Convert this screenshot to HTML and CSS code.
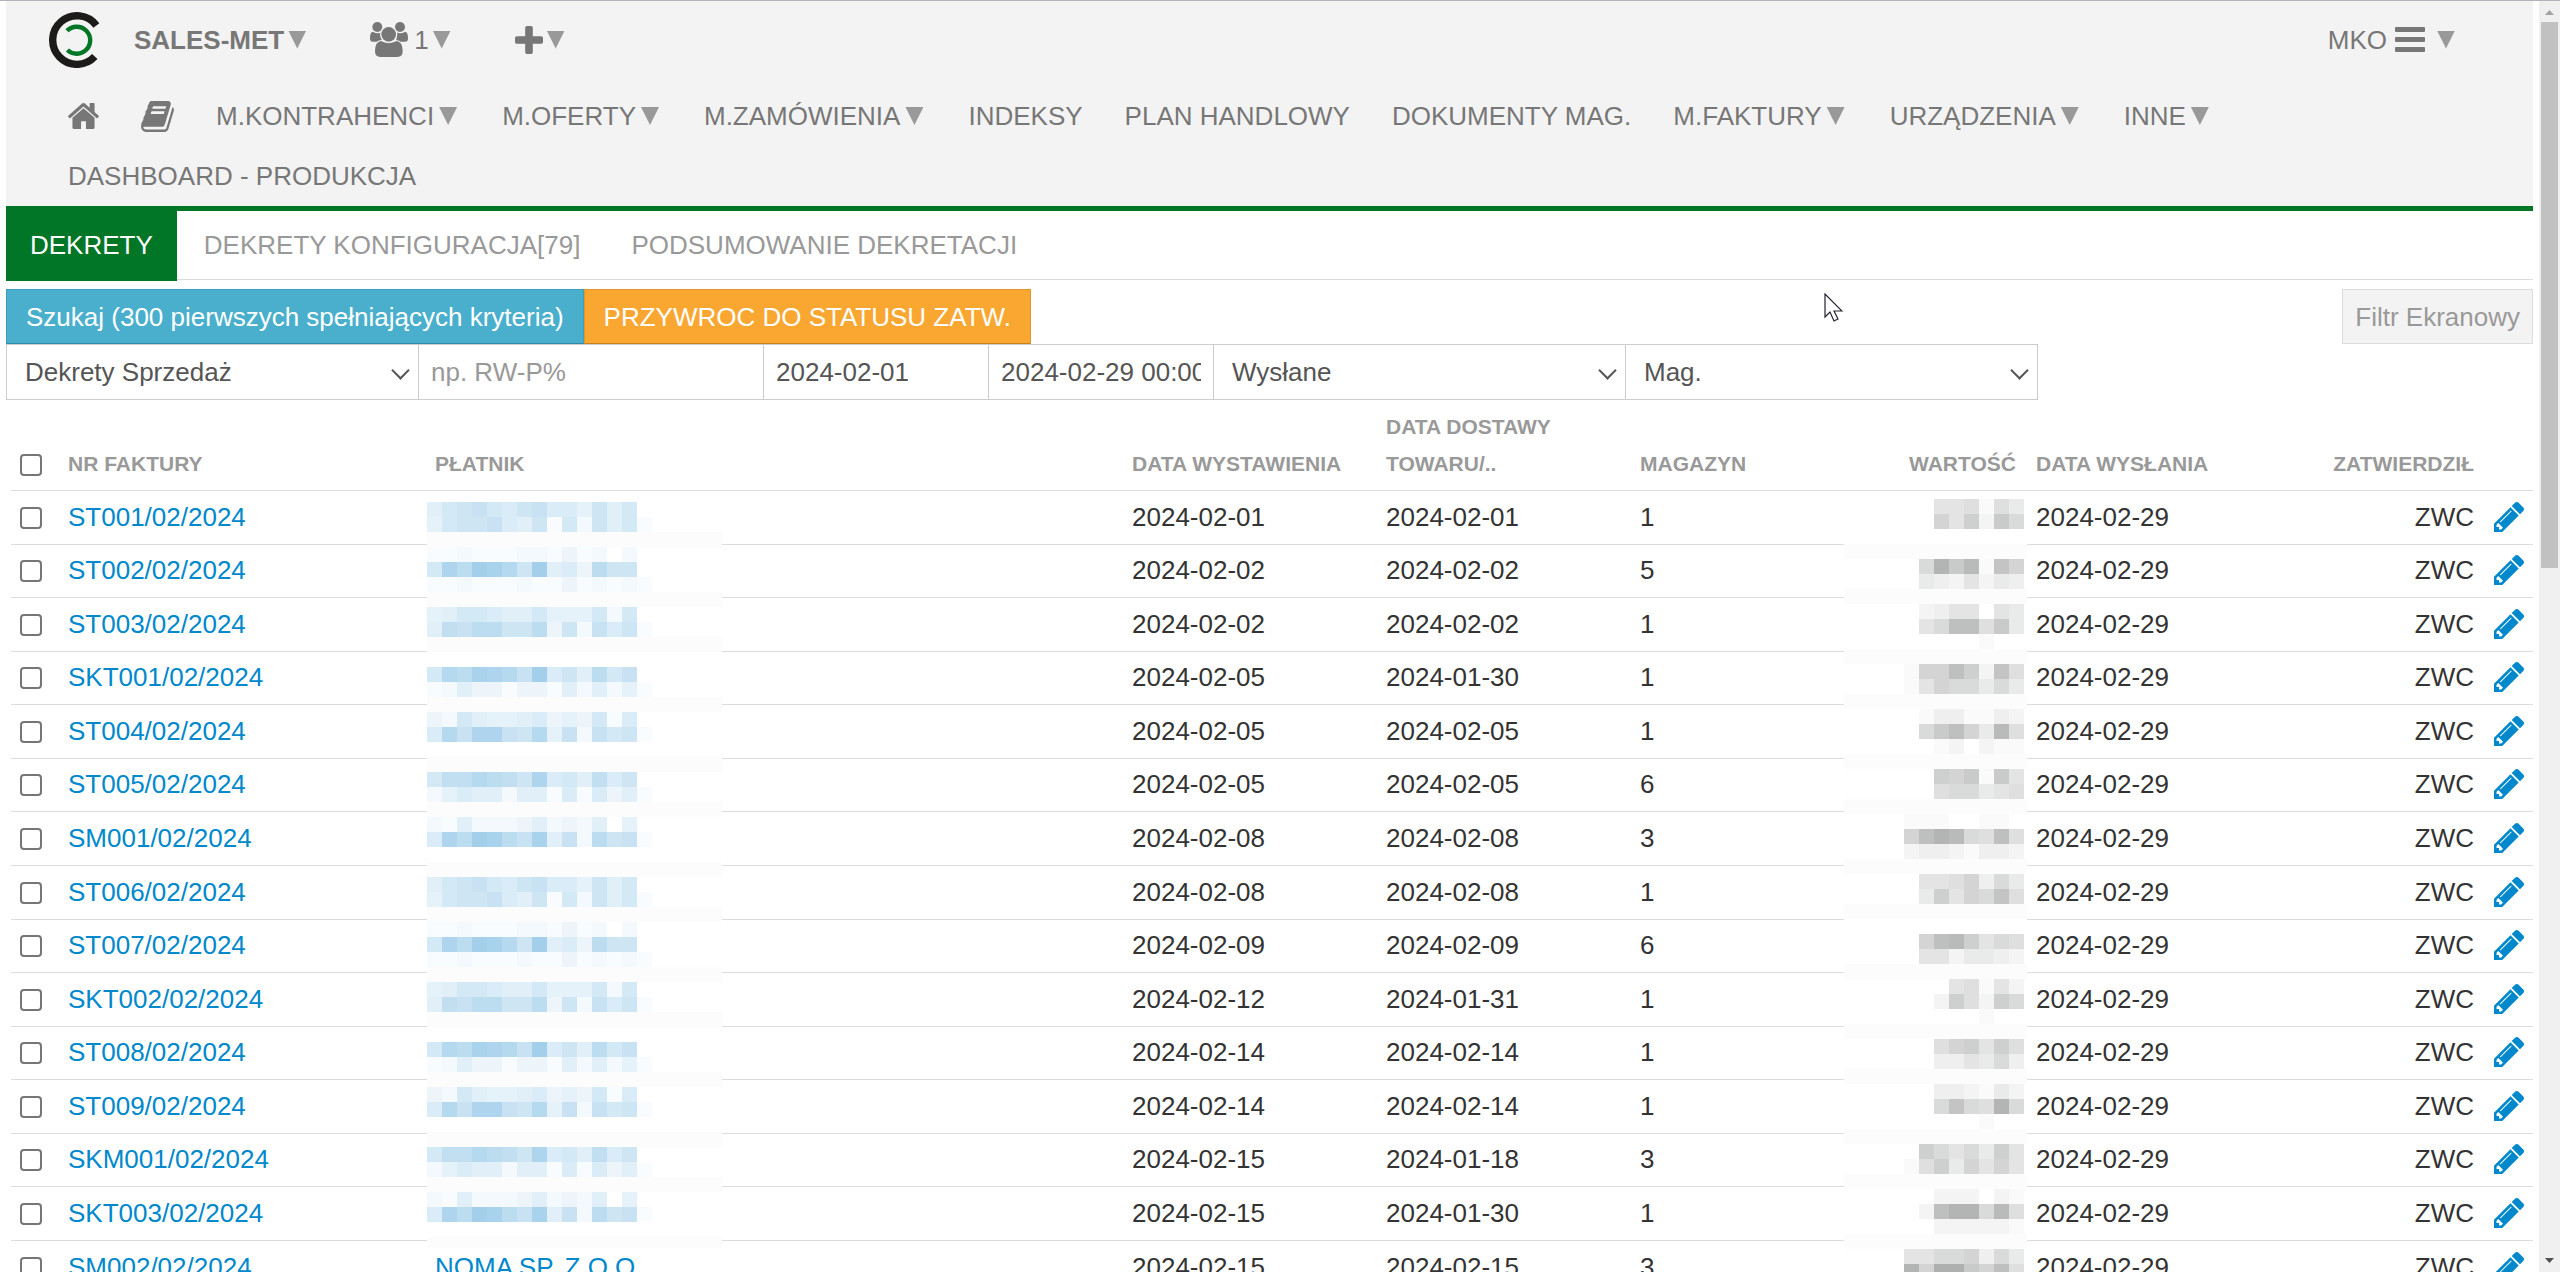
FILE: index.html
```html
<!DOCTYPE html>
<html lang="pl">

	<head>
		<meta charset="utf-8">
		<meta name="viewport" content="width=device-width,initial-scale=1" />
		<title>Dekrety</title>
		<link rel="stylesheet" href="styles.css">
	</head>

	<body>
		<div class="page">
			<header class="header">
				<div class="topbar">
					<a class="logo" href="#" aria-label="Start">
						<svg width="52" height="56" viewBox="0 0 52 56">
							<path d="M47.4 13.4A24.3 24.3 0 1 0 45.8 44.6" fill="none" stroke="#1c1b19" stroke-width="7.4" />
							<path d="M18 18.8A13.5 13.5 0 1 1 18.4 38" fill="none" stroke="#007626" stroke-width="4.4" />
						</svg>
					</a>
					<a class="top-link brand" href="#">SALES-MET<span class="caret"></span></a>
					<a class="top-link users" href="#">
						<svg width="38" height="35" viewBox="0 0 114 105">
							<path d="M0 50q0-21 9-21q12 8 26 2v28H9q-9 0-9-9zM114 50q0-21-9-21q-12 8-26 2v28h26q9 0 9-9z" />
							<circle cx="22" cy="15" r="15" />
							<circle cx="90" cy="15" r="15" />
							<circle class="gap" cx="56" cy="37" r="26" />
							<path class="gap" d="M12 88q0-33 22-34h44q22 1 22 34z" />
							<circle cx="56" cy="37" r="22" />
							<path d="M15 88q0-29 18-31q23 13 47 0q18 2 18 31q0 17-16 17H31q-16 0-16-17z" />
						</svg>
						<span>1</span><span class="caret"></span>
					</a>
					<a class="top-link add" href="#" aria-label="Dodaj">
						<svg width="28" height="28" viewBox="192 128 1408 1408"><path d="M1600 736v192q0 40-28 68t-68 28h-416v416q0 40-28 68t-68 28h-192q-40 0-68-28t-28-68v-416h-416q-40 0-68-28t-28-68v-192q0-40 28-68t68-28h416v-416q0-40 28-68t68-28h192q40 0 68 28t28 68v416h416q40 0 68 28t28 68z" /></svg>
						<span class="caret"></span>
					</a>
					<a class="top-link user" href="#">MKO
						<span class="bars"><i></i><i></i><i></i></span>
						<span class="caret"></span>
					</a>
				</div>
				<nav class="nav">
					<a href="#" aria-label="Strona główna">
						<svg width="31" height="26" viewBox="89 253 1614 1283" preserveAspectRatio="none"><path d="M1472 992v480q0 26-19 45t-45 19h-384v-384h-256v384h-384q-26 0-45-19t-19-45v-480q0-1 .5-3t.5-3l575-474 575 474q1 2 1 6zm223-69l-62 74q-8 9-21 11h-3q-13 0-21-7l-692-577-692 577q-12 8-24 7-13-2-21-11l-62-74q-8-10-7-23.500t11-21.500l719-599q32-26 76-26t76 26l244 204v-195q0-14 9-23t23-9h192q14 0 23 9t9 23v408l219 182q10 8 11 21.500t-7 23.500z" /></svg>
					</a>
					<a href="#" aria-label="Książka">
						<svg width="33" height="31" viewBox="62 128 1668 1536" preserveAspectRatio="none"><path d="M1703 478q40 57 18 129l-275 906q-19 64-76.500 107.500t-122.500 43.500h-923q-77 0-148.500-53.500t-99.500-131.500q-24-67-2-127 0-4 3-27t4-37q1-8-3-21.500t-3-19.500q2-11 8-21t16.500-23.500 16.500-23.500q23-38 45-91.500t30-91.500q3-10 .5-30t-.5-28q3-11 17-28t17-23q21-36 42-92t25-90q1-9-2.500-32t.5-28q4-13 22-30.500t22-22.500q19-26 42.500-84.500t27.500-96.500q1-8-3-25.500t-2-26.500q2-8 9-18t18-23 17-21q8-12 16.500-30.500t15-35 16-36 19.500-32 26.500-23.500 36-11.500 47.500 5.500l-1 3q38-9 51-9h761q74 0 114 56t18 130l-274 906q-36 119-71.500 153.500t-128.500 34.500h-869q-27 0-38 15-11 16-1 43 24 70 144 70h923q29 0 56-15.500t35-41.500l300-987q7-22 5-57 38 15 59 43zm-1064 2q-4 13 2 22.500t20 9.500h608q13 0 25.500-9.500t16.500-22.500l21-64q4-13-2-22.500t-20-9.500h-608q-13 0-25.500 9.500t-16.500 22.500zm-83 256q-4 13 2 22.500t20 9.500h608q13 0 25.500-9.500t16.500-22.500l21-64q4-13-2-22.500t-20-9.500h-608q-13 0-25.500 9.500t-16.500 22.500z" /></svg>
					</a>
					<a href="#">M.KONTRAHENCI<span class="caret"></span></a>
					<a href="#">M.OFERTY<span class="caret"></span></a>
					<a href="#">M.ZAMÓWIENIA<span class="caret"></span></a>
					<a href="#">INDEKSY</a>
					<a href="#">PLAN HANDLOWY</a>
					<a href="#">DOKUMENTY MAG.</a>
					<a href="#">M.FAKTURY<span class="caret"></span></a>
					<a href="#">URZĄDZENIA<span class="caret"></span></a>
					<a href="#">INNE<span class="caret"></span></a>
					<a href="#">DASHBOARD - PRODUKCJA</a>
				</nav>
			</header>

			<div class="tabs">
				<a class="active" href="#">DEKRETY</a>
				<a href="#">DEKRETY KONFIGURACJA[79]</a>
				<a href="#">PODSUMOWANIE DEKRETACJI</a>
			</div>

			<form class="search">
				<div class="actions">
					<button type="button" class="btn btn-info">Szukaj (300 pierwszych spełniających kryteria)</button>
					<button type="button" class="btn btn-warning">PRZYWROC DO STATUSU ZATW.</button>
					<button type="button" class="btn btn-filter">Filtr Ekranowy</button>
				</div>
				<div class="filters">
					<div class="select">
						<select aria-label="Rodzaj"><option>Dekrety Sprzedaż</option></select>
					</div>
					<input class="number" type="text" placeholder="np. RW-P%" aria-label="Numer" />
					<input class="date" type="text" value="2024-02-01" aria-label="Data od" />
					<input class="date" type="text" value="2024-02-29 00:00:00" aria-label="Data do" />
					<div class="select">
						<select aria-label="Status"><option>Wysłane</option></select>
					</div>
					<div class="select">
						<select aria-label="Magazyn"><option>Mag.</option></select>
					</div>
				</div>
			</form>

			<table class="list">
				<colgroup>
					<col class="c-check" />
					<col class="c-nr" />
					<col />
					<col class="c-date" />
					<col class="c-date" />
					<col class="c-mag" />
					<col class="c-value" />
					<col class="c-sent" />
					<col class="c-who" />
					<col class="c-edit" />
				</colgroup>
				<thead>
					<tr>
						<th class="check"><input type="checkbox" aria-label="Zaznacz wszystkie" /></th>
						<th>NR FAKTURY</th>
						<th>PŁATNIK</th>
						<th>DATA WYSTAWIENIA</th>
						<th>DATA DOSTAWY TOWARU/..</th>
						<th>MAGAZYN</th>
						<th class="right">WARTOŚĆ</th>
						<th>DATA WYSŁANIA</th>
						<th class="right">ZATWIERDZIŁ</th>
						<th></th>
					</tr>
				</thead>
				<tbody id="rows"></tbody>
			</table>
		</div>

		<div class="scrollbar">
			<span class="arrow-up"></span>
			<span class="thumb"></span>
			<span class="arrow-down"></span>
		</div>

		<svg class="cursor" width="19" height="29" viewBox="0 0 19 29">
			<path d="M1 1v23l5-5 4 9 4-2-4-8h8z" fill="#fff" stroke="#223" stroke-width="1.2" />
		</svg>

		<script src="app.js"></script>
	</body>

</html>
```
FILE: styles.css
```css
* {
	box-sizing: border-box;
}

html,
body {
	height: 100%;
}

body {
	margin: 0;
	display: flex;
	overflow: hidden;
	border-top: 1px solid #b3b0b8;
	background: #fff;
	color: #333;
	font: 26px/36px "Liberation Sans", Arial, sans-serif;
}

a {
	color: #08c;
	text-decoration: none;
}

.page {
	flex: 1;
	min-width: 0;
	padding: 0 6px;
}

/* header */
.header {
	background: #f3f3f3;
	border-bottom: 5px solid #007626;
}

.header a {
	display: flex;
	align-items: center;
	color: #777;
}

.header svg {
	fill: currentColor;
}

.header .gap {
	fill: #f3f3f3;
}

.topbar {
	display: flex;
	align-items: center;
	height: 77px;
	padding: 0 78px 0 43px;
}

.logo {
	margin-right: 33px;
}

.top-link {
	margin-right: 64px;
}

.topbar .user {
	margin: 0 0 0 auto;
	gap: 8px;
}

.brand {
	font-weight: bold;
}

.users svg {
	margin-right: 6px;
}

.caret {
	width: 18px;
	height: 18px;
	margin-left: 4px;
	background: #999;
	clip-path: polygon(0 0, 100% 0, 50% 100%);
}

.bars {
	display: grid;
	gap: 5px;
	width: 30px;
}

.bars i {
	height: 5px;
	border-radius: 1px;
	background: #777;
}

.nav {
	display: flex;
	flex-wrap: wrap;
	padding: 8px 0 0 41px;
}

.nav a {
	height: 60px;
	padding: 0 21px;
}

.nav .caret {
	margin: 0 3px 0 5px;
}

/* tabs */
.tabs {
	display: flex;
	gap: 3px;
	height: 69px;
	border-bottom: 1px solid #ddd;
}

.tabs a {
	height: 70px;
	padding: 0 24px;
	color: #999;
	line-height: 68px;
}

.tabs .active {
	background: #007626;
	color: #fff;
}

/* search form */
.search {
	padding-top: 9px;
}

.actions,
.filters {
	display: flex;
}

.btn {
	height: 55px;
	padding: 0 19px;
	border: 1px solid;
	font: inherit;
}

.btn-info {
	background: #49afcd;
	border-color: #3d9fbd #3d9fbd #2f8aa5;
	color: #fff;
}

.btn-warning {
	background: #faa732;
	border-color: #e0962d #e0962d #c67f1b;
	color: #fff;
}

.btn-filter {
	margin-left: auto;
	padding: 0 12px;
	background: #f3f3f3;
	border-color: #ddd;
	color: #999;
}

.filters input,
.filters select {
	width: 100%;
	height: 56px;
	padding: 0 12px;
	border: 1px solid #ccc;
	border-radius: 0;
	background: #fff;
	color: #555;
	font: inherit;
}

.filters > * + * {
	margin-left: -1px;
}

.filters .number {
	width: 346px;
}

.filters .date {
	width: 226px;
}

.filters ::placeholder {
	color: #999;
}

.select {
	position: relative;
	width: 413px;
}

.filters select {
	appearance: none;
	padding: 0 18px;
}

.select::after {
	content: "";
	position: absolute;
	top: 20px;
	right: 12px;
	width: 11px;
	height: 11px;
	border: solid #555;
	border-width: 0 2px 2px 0;
	transform: rotate(45deg);
	pointer-events: none;
}

/* invoice list */
.list {
	width: calc(100% - 5px);
	margin-left: 5px;
	border-spacing: 0;
	table-layout: fixed;
}

.c-check {
	width: 45px;
}

.c-nr {
	width: 367px;
}

.c-date {
	width: 254px;
}

.c-mag {
	width: 252px;
}

.c-value {
	width: 144px;
}

.c-sent {
	width: 228px;
}

.c-who {
	width: 230px;
}

.c-edit {
	width: 51px;
}

.list th {
	padding: 8px 8px 8px 12px;
	color: #999;
	font-size: 21px;
	line-height: 37px;
	text-align: left;
	vertical-align: bottom;
}

.list td {
	position: relative;
	height: 54px;
	padding: 0 8px 2px 12px;
	border-top: 1px solid #ddd;
	line-height: 36px;
	white-space: nowrap;
}

.list tr:nth-child(7n+2) td,
.list tr:nth-child(7n+4) td,
.list tr:nth-child(7n+6) td {
	height: 53px;
}

.list .right {
	text-align: right;
}

.list .check {
	padding-left: 9px;
}

.list input {
	display: block;
	appearance: none;
	width: 22px;
	height: 22px;
	margin: 2px 0 0;
	border: 2px solid #767676;
	border-radius: 4px;
	background: #fff;
}

.list th input {
	margin-bottom: 6px;
}

.list td svg {
	display: block;
	fill: #08c;
}

/* hidden customer data, laid over the rows */
.mosaic {
	position: absolute;
	z-index: 1;
	background: #fff;
}

.mosaic.payer {
	top: 11px;
	left: 4px;
	width: 295px;
	height: 746px;
}

.mosaic.value {
	top: 8px;
	right: -3px;
	width: 183px;
	height: 780px;
}

/* scrollbar */
.scrollbar {
	display: flex;
	flex-direction: column;
	align-items: center;
	width: 21px;
	padding: 9px 0;
	background: #f0f0f0;
}

.thumb {
	width: 17px;
	height: 546px;
	margin: 7px 0 auto;
	background: #c1c1c1;
}

.arrow-up,
.arrow-down {
	width: 9px;
	height: 5px;
	background: #a3a3a3;
	clip-path: polygon(50% 0, 100% 100%, 0 100%);
}

.arrow-down {
	background: #505050;
	clip-path: polygon(0 0, 100% 0, 50% 100%);
}

.cursor {
	position: absolute;
	top: 293px;
	left: 1824px;
}
```
FILE: app.js
```js
var invoices = [
	['ST001/02/2024', '2024-02-01', '2024-02-01', 1],
	['ST002/02/2024', '2024-02-02', '2024-02-02', 5],
	['ST003/02/2024', '2024-02-02', '2024-02-02', 1],
	['SKT001/02/2024', '2024-02-05', '2024-01-30', 1],
	['ST004/02/2024', '2024-02-05', '2024-02-05', 1],
	['ST005/02/2024', '2024-02-05', '2024-02-05', 6],
	['SM001/02/2024', '2024-02-08', '2024-02-08', 3],
	['ST006/02/2024', '2024-02-08', '2024-02-08', 1],
	['ST007/02/2024', '2024-02-09', '2024-02-09', 6],
	['SKT002/02/2024', '2024-02-12', '2024-01-31', 1],
	['ST008/02/2024', '2024-02-14', '2024-02-14', 1],
	['ST009/02/2024', '2024-02-14', '2024-02-14', 1],
	['SKM001/02/2024', '2024-02-15', '2024-01-18', 3],
	['SKT003/02/2024', '2024-02-15', '2024-01-30', 1],
	['SM002/02/2024', '2024-02-15', '2024-02-15', 3, 'NOMA SP. Z O.O.']
];

// one string per 15px band, one hex digit of strength per block;
// '-' is a faint full-width band, '' is an empty one
var payerBands = [
	'578976896648570', '478896581728571', '-',
	'112111221312020', '7dbfec8f563b880', '112111211312121', '-',
	'457765574447270', '5a9bb88b3829681', '-', '',
	'7cbedc9f685b790', '125331331525241', '-',
	'327544563437160', '6c9dd98c4929781', '', '-',
	'7aacba8d675a680', '246552551616351', '-',
	'215222352325040', '6dbfeb9e592b891', '', '-'
];
payerBands = payerBands.concat(payerBands);

var valueBands = [
	'00556164', '008592a7', '', '-',
	'07ead1b8', '04325243', '-',
	'02355054', '057cc6a4', '00000100', '-',
	'188c92b6', '15877474', '-',
	'01331132', '07ac84d6', '00120211', '-',
	'0098a1a5', '00677456', '-',
	'11100110', '8ced76c6', '23321332', '-',
	'05568374', '049587b6', '-', '',
	'08cd9576', '05524432', '-',
	'00056152', '00296297', '00000100', '-',
	'00689596', '00335473', '-',
	'00332142', '007b76e7', '00000100', '-',
	'09757495', '16948585', '-',
	'00222021', '02cee7d6', '00222221', '-',
	'55778374', 'e8ffa8c6'
];

function mosaic(name, bands, startX, width, dark) {
	var out = '';
	bands.forEach(function(band, row) {
		if (band === '-') {
			out += '<rect x="0" y="' + row * 15 + '" width="' + width + '" height="15" fill="#fcfcfc"/>';
			return;
		}
		band.split('').forEach(function(digit, col) {
			var strength = parseInt(digit, 16) / 15;
			if (!strength) return;
			var rgb = dark.map(function(c) {
				return Math.round(255 - (255 - c) * strength);
			});
			out += '<rect x="' + (startX + col * 15) + '" y="' + row * 15 + '" width="15" height="15" fill="rgb(' + rgb.join() + ')"/>';
		});
	});
	return '<svg class="mosaic ' + name + '" shape-rendering="crispEdges">' + out + '</svg>';
}

var pencil = '<svg width="30" height="30" viewBox="128 149 1515 1515"><path d="M491 1536l91-91-235-235-91 91v107h128v128h107zm523-928q0-22-22-22-10 0-17 7l-542 542q-7 7-7 17 0 22 22 22 10 0 17-7l542-542q7-7 7-17zm-54-192l416 416-832 832h-416v-416zm683 96q0 53-37 90l-166 166-416-416 166-165q36-38 90-38 53 0 91 38l235 234q37 39 37 91z"/></svg>';

document.getElementById('rows').innerHTML = invoices.map(function(inv, i) {
	var payer = inv[4] ? '<a href="#">' + inv[4] + '</a>' : '';
	var value = '';
	if (i === 0) {
		payer = mosaic('payer', payerBands, 0, 295, [163, 207, 235]);
		value = mosaic('value', valueBands, 60, 183, [174, 175, 175]);
	}
	return '<tr>' +
		'<td class="check"><input type="checkbox" aria-label="' + inv[0] + '"></td>' +
		'<td><a href="#">' + inv[0] + '</a></td>' +
		'<td>' + payer + '</td>' +
		'<td>' + inv[1] + '</td>' +
		'<td>' + inv[2] + '</td>' +
		'<td>' + inv[3] + '</td>' +
		'<td>' + value + '</td>' +
		'<td>2024-02-29</td>' +
		'<td class="right">ZWC</td>' +
		'<td><a href="#" aria-label="Edytuj">' + pencil + '</a></td>' +
		'</tr>';
}).join('');
```
